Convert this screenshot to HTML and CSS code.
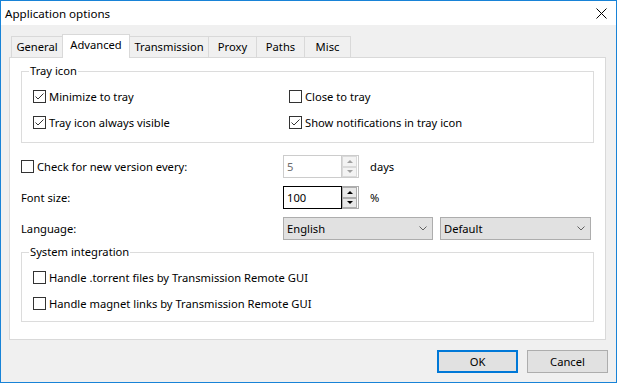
FILE: index.html
```html
<!DOCTYPE html>
<html>
<head>
<meta charset="utf-8">
<title>Application options</title>
<link rel="stylesheet" href="styles.css">
</head>
<body>
<div class="window">
  <div class="titlebar">
    <span class="title">Application options</span>
    <svg class="close" width="11" height="11" viewBox="0 0 11 11"><path d="M0.5 0.5 L10.5 10.5 M10.5 0.5 L0.5 10.5" stroke="#000" stroke-width="1" fill="none"/></svg>
  </div>
  <div class="client">
    <div class="tabs">
      <div class="tab tab-general">General</div>
      <div class="tab tab-advanced selected">Advanced</div>
      <div class="tab tab-transmission">Transmission</div>
      <div class="tab tab-proxy">Proxy</div>
      <div class="tab tab-paths">Paths</div>
      <div class="tab tab-misc">Misc</div>
    </div>
    <div class="panel">
      <div class="group tray">
        <div class="group-title">Tray icon</div>
        <div class="check-grid">
          <label class="check"><span class="box"><svg width="11" height="11" viewBox="0 0 11 11"><polyline points="1.5,5.5 4,8 9.5,2.5" fill="none" stroke="#333" stroke-width="1"/></svg></span>Minimize to tray</label>
          <label class="check"><span class="box"></span>Close to tray</label>
          <label class="check"><span class="box"><svg width="11" height="11" viewBox="0 0 11 11"><polyline points="1.5,5.5 4,8 9.5,2.5" fill="none" stroke="#333" stroke-width="1"/></svg></span>Tray icon always visible</label>
          <label class="check"><span class="box"><svg width="11" height="11" viewBox="0 0 11 11"><polyline points="1.5,5.5 4,8 9.5,2.5" fill="none" stroke="#333" stroke-width="1"/></svg></span>Show notifications in tray icon</label>
        </div>
      </div>
      <div class="form">
        <label class="check"><span class="box"></span>Check for new version every:</label>
        <div class="spin disabled">
          <div class="spin-field">5</div>
          <div class="spin-btns">
            <div class="spin-btn"><span class="tri-up"></span></div>
            <div class="spin-btn"><span class="tri-down"></span></div>
          </div>
        </div>
        <span class="unit">days</span>

        <span class="form-label">Font size:</span>
        <div class="spin focused">
          <div class="spin-field">100</div>
          <div class="spin-btns">
            <div class="spin-btn"><span class="tri-up"></span></div>
            <div class="spin-btn"><span class="tri-down"></span></div>
          </div>
        </div>
        <span class="unit">%</span>

        <span class="form-label">Language:</span>
        <div class="combos">
          <div class="combo combo-lang"><span>English</span><svg width="8" height="5" viewBox="0 0 8 5"><polyline points="0.5,0.5 4,4 7.5,0.5" fill="none" stroke="#606060" stroke-width="1"/></svg></div>
          <div class="combo combo-def"><span>Default</span><svg width="8" height="5" viewBox="0 0 8 5"><polyline points="0.5,0.5 4,4 7.5,0.5" fill="none" stroke="#606060" stroke-width="1"/></svg></div>
        </div>
      </div>
      <div class="group sys">
        <div class="group-title">System integration</div>
        <div class="check-list">
          <label class="check"><span class="box"></span>Handle .torrent files by Transmission Remote GUI</label>
          <label class="check"><span class="box"></span>Handle magnet links by Transmission Remote GUI</label>
        </div>
      </div>
    </div>
    <div class="buttons">
      <button class="btn default">OK</button>
      <button class="btn">Cancel</button>
    </div>
  </div>
</div>
</body>
</html>
```
FILE: styles.css
```css
html, body {
  margin: 0;
  padding: 0;
  background: #f0f0f0;
}
.window {
  width: 617px;
  height: 383px;
  box-sizing: border-box;
  border: 1px solid #1883d7;
  background: #f0f0f0;
  font-family: "Noto Sans", sans-serif;
  font-size: 11.2px;
  color: #000;
  display: flex;
  flex-direction: column;
  overflow: hidden;
}
.titlebar {
  height: 24px;
  flex: none;
  background: #fff;
  display: flex;
  align-items: center;
  justify-content: space-between;
  padding: 0 9px 0 4px;
}
.title {
  font-size: 11.6px;
}
.close {
  display: block;
}
.client {
  flex: 1;
  padding-top: 9px;
  display: flex;
  flex-direction: column;
}
.tabs {
  position: relative;
  z-index: 1;
  display: flex;
  align-items: flex-end;
  height: 23px;
  margin-left: 10px;
}
.tab {
  height: 21px;
  box-sizing: border-box;
  border: 1px solid #d9d9d9;
  border-bottom: 0;
  margin-right: -1px;
  background: #f0f0f0;
  display: flex;
  align-items: center;
  justify-content: center;
  line-height: 1;
  padding-bottom: 1px;
}
.tab.selected {
  height: 24px;
  margin-bottom: -1px;
  background: #fff;
  position: relative;
  z-index: 2;
  padding-bottom: 3px;
}
.tab-general { width: 52px; }
.tab-advanced { width: 68px; }
.tab-transmission { width: 80px; }
.tab-proxy { width: 49px; }
.tab-paths { width: 49px; }
.tab-misc { width: 47px; }

.panel {
  margin-left: 8px;
  width: 597px;
  height: 283px;
  box-sizing: border-box;
  border: 1px solid #d9d9d9;
  background: #fff;
  padding: 13px 11px 0 11px;
}
.group {
  border: 1px solid #dcdcdc;
}
.group-title {
  width: fit-content;
  margin: -9px 0 0 7px;
  padding: 0 1px;
  background: #fff;
  line-height: 16px;
}
.check-grid {
  display: grid;
  grid-template-columns: 256px 1fr;
  grid-auto-rows: 26px;
  padding: 4px 0 7px 11px;
}
.check-list {
  display: grid;
  grid-auto-rows: 26px;
  padding: 4px 0 5px 11px;
}
.check {
  display: flex;
  align-items: center;
  gap: 3px;
  white-space: nowrap;
}
.box {
  width: 13px;
  height: 13px;
  box-sizing: border-box;
  border: 1px solid #333;
  background: #fff;
  flex: none;
  display: flex;
}
.box svg {
  display: block;
}
.form {
  display: grid;
  grid-template-columns: 262px 76px 1fr;
  grid-auto-rows: 23px;
  row-gap: 8px;
  margin-top: 12px;
  align-items: center;
}
.unit {
  margin-left: 11px;
}
.spin {
  display: flex;
  height: 23px;
  width: 76px;
}
.spin-field {
  width: 59px;
  box-sizing: border-box;
  border: 1px solid #cccccc;
  padding-left: 3px;
  display: flex;
  align-items: center;
}
.spin-btns {
  width: 17px;
  box-sizing: border-box;
  border: 1px solid #cccccc;
  border-left: 0;
  padding: 0 1px 0 0;
  display: flex;
  flex-direction: column;
}
.spin-btn {
  flex: 1;
  box-sizing: border-box;
  border: 1px solid #dadada;
  background: #f3f3f3;
  display: flex;
  align-items: center;
  justify-content: center;
}
.tri-up, .tri-down {
  width: 0;
  height: 0;
  border-left: 3px solid transparent;
  border-right: 3px solid transparent;
}
.tri-up { border-bottom: 3px solid #a0a0a0; }
.tri-down { border-top: 3px solid #a0a0a0; }
.spin.disabled .spin-field { color: #6d6d6d; }
.spin.focused .spin-field { border-color: #000; }
.spin.focused .spin-btns { border-color: #adadad; }
.spin.focused .spin-btn { border-color: #adadad; background: #e8e8e8; }
.spin.focused .tri-up { border-bottom-color: #000; }
.spin.focused .tri-down { border-top-color: #000; }

.combos {
  grid-column: 2 / 4;
  display: flex;
  gap: 7px;
  height: 23px;
}
.combo {
  box-sizing: border-box;
  height: 23px;
  border: 1px solid #adadad;
  background: #e1e1e1;
  display: flex;
  align-items: center;
  justify-content: space-between;
  padding: 0 5px 0 3px;
}
.combo-lang { width: 150px; }
.combo-def { width: 151px; }
.combo svg { display: block; }

.group.sys {
  margin-top: 12px;
}
.buttons {
  display: flex;
  justify-content: flex-end;
  gap: 9px;
  margin-top: 10px;
  padding-right: 8px;
}
.btn {
  width: 81px;
  height: 23px;
  box-sizing: border-box;
  border: 1px solid #adadad;
  background: #e1e1e1;
  font: inherit;
  color: #000;
  padding: 0;
  margin: 0;
}
.btn.default {
  border: 2px solid #0078d7;
}
```
